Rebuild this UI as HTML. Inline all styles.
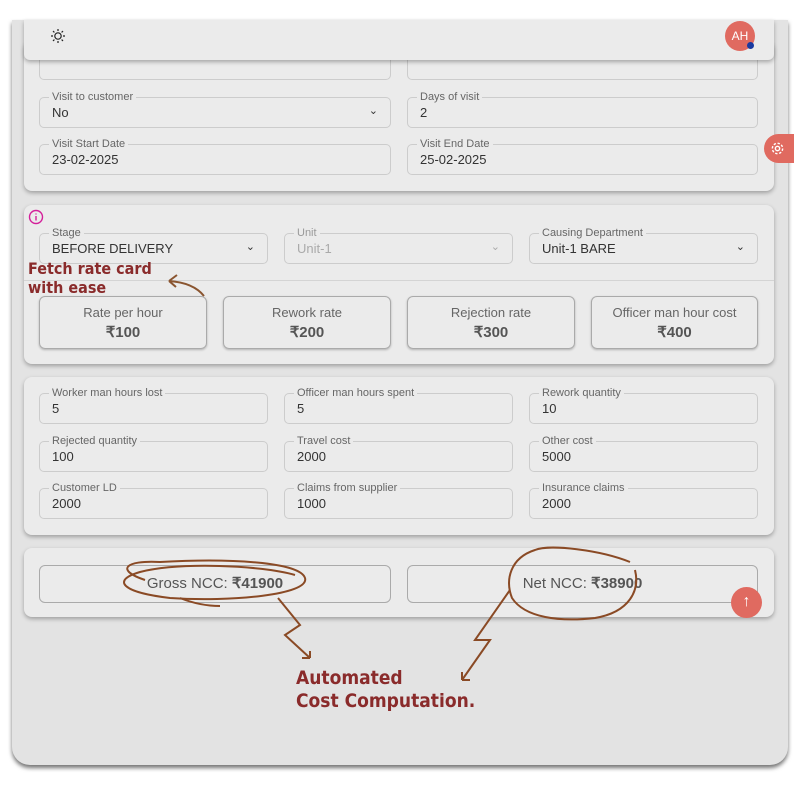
<!DOCTYPE html>
<html><head><meta charset="utf-8"><style>
*{box-sizing:border-box;margin:0;padding:0}
body{width:800px;height:800px;background:#fff;font-family:"Liberation Sans",sans-serif;position:relative;overflow:hidden;color:#333}
.frame{position:absolute;left:12px;top:20px;width:776px;height:745px;background:#e3e3e3;border-radius:0 0 18px 18px;box-shadow:0 3px 4px rgba(0,0,0,.55)}
.a{position:absolute}
.card{position:absolute;left:24px;width:750px;background:#ebebeb;border-radius:8px;box-shadow:0 2px 4px rgba(0,0,0,.3)}
.f{position:absolute;height:31px;border:1px solid #ccc;border-radius:5px}
.f .l{position:absolute;left:9px;top:-7px;font-size:11px;color:#666;background:#ebebeb;padding:0 3px;line-height:12px}
.f .v{position:absolute;left:12px;top:7px;font-size:13px;color:#333}
.f .c{position:absolute;right:12px;top:6px;font-size:11px;color:#333}
.r{position:absolute;top:296px;height:53px;border:1px solid #aaa;border-radius:6px;text-align:center;box-shadow:0 1px 2px rgba(0,0,0,.25)}
.r .t{font-size:13px;color:#666;margin-top:8px}
.r .n{font-size:15px;font-weight:bold;color:#555;margin-top:3px}
.ann{position:absolute;color:#8a2b2b;font-weight:bold;font-family:"DejaVu Sans Condensed","DejaVu Sans",sans-serif}
</style></head><body>
<div class="frame"></div>
<div class="card" style="top:20px;height:40px;border-radius:0 0 6px 6px;z-index:3">
<svg class="a" style="left:26px;top:8px" width="16" height="16" viewBox="0 0 16 16" fill="none" stroke="#222" stroke-width="1.2"><circle cx="8" cy="8" r="3.2"/><path d="M8 1v2M8 13v2M1 8h2M13 8h2M3 3l1.4 1.4M11.6 11.6L13 13M3 13l1.4-1.4M11.6 4.4L13 3"/></svg>
<div class="a" style="left:701px;top:1px;width:30px;height:30px;border-radius:50%;background:#e06a60;color:#fff;font-size:12px;text-align:center;line-height:30px">AH</div>
<div class="a" style="left:723px;top:22px;width:7px;height:7px;border-radius:50%;background:#1a3aa0"></div>
</div>
<div class="card" style="top:40px;height:151px"></div>
<div class="f" style="left:39px;top:50px;width:352px;height:30px"></div>
<div class="f" style="left:407px;top:50px;width:351px;height:30px"></div>
<div class="f" style="left:39px;top:97px;width:352px"><span class="l">Visit to customer</span><span class="v">No</span><span class="c">⌄</span></div>
<div class="f" style="left:407px;top:97px;width:351px"><span class="l">Days of visit</span><span class="v">2</span></div>
<div class="f" style="left:39px;top:144px;width:352px"><span class="l">Visit Start Date</span><span class="v">23-02-2025</span></div>
<div class="f" style="left:407px;top:144px;width:351px"><span class="l">Visit End Date</span><span class="v">25-02-2025</span></div>
<div class="a" style="left:764px;top:134px;width:30px;height:29px;border-radius:15px 0 0 15px;background:#e06a60"></div>
<svg class="a" style="left:770px;top:141px" width="15" height="15" viewBox="0 0 16 16" fill="none" stroke="#fff" stroke-width="1.5"><circle cx="8" cy="8" r="2.3"/><circle cx="8" cy="8" r="5.5" stroke-dasharray="2.5 1.8"/></svg>
<div class="card" style="top:205px;height:159px"></div>
<svg class="a" style="left:28px;top:209px" width="16" height="16" viewBox="0 0 16 16" fill="none" stroke="#d4209a" stroke-width="1.4"><circle cx="8" cy="8" r="6.5"/><path d="M8 7v4.5M8 4.5v1"/></svg>
<div class="f" style="left:39px;top:233px;width:229px"><span class="l">Stage</span><span class="v">BEFORE DELIVERY</span><span class="c">⌄</span></div>
<div class="f" style="left:284px;top:233px;width:229px"><span class="l" style="color:#999">Unit</span><span class="v" style="color:#aaa">Unit-1</span><span class="c" style="color:#aaa">⌄</span></div>
<div class="f" style="left:529px;top:233px;width:229px"><span class="l">Causing Department</span><span class="v">Unit-1 BARE</span><span class="c">⌄</span></div>
<div class="a" style="left:24px;top:280px;width:750px;height:1px;background:#d4d4d4"></div>
<div class="r" style="left:39px;width:168px"><div class="t">Rate per hour</div><div class="n">₹100</div></div>
<div class="r" style="left:223px;width:168px"><div class="t">Rework rate</div><div class="n">₹200</div></div>
<div class="r" style="left:407px;width:168px"><div class="t">Rejection rate</div><div class="n">₹300</div></div>
<div class="r" style="left:591px;width:167px"><div class="t">Officer man hour cost</div><div class="n">₹400</div></div>
<div class="ann" style="left:28px;top:259px;font-size:16px;line-height:19px">Fetch rate card<br>with ease</div>
<svg class="a" style="left:160px;top:270px" width="50" height="30" fill="none" stroke="#8a5530" stroke-width="2"><path d="M44 26C36 16 24 12 9 11M9 11l8-6M9 11l7 6"/></svg>
<div class="card" style="top:377px;height:158px"></div>
<div class="f" style="left:39px;top:393px;width:229px"><span class="l">Worker man hours lost</span><span class="v">5</span></div>
<div class="f" style="left:284px;top:393px;width:229px"><span class="l">Officer man hours spent</span><span class="v">5</span></div>
<div class="f" style="left:529px;top:393px;width:229px"><span class="l">Rework quantity</span><span class="v">10</span></div>
<div class="f" style="left:39px;top:441px;width:229px"><span class="l">Rejected quantity</span><span class="v">100</span></div>
<div class="f" style="left:284px;top:441px;width:229px"><span class="l">Travel cost</span><span class="v">2000</span></div>
<div class="f" style="left:529px;top:441px;width:229px"><span class="l">Other cost</span><span class="v">5000</span></div>
<div class="f" style="left:39px;top:488px;width:229px"><span class="l">Customer LD</span><span class="v">2000</span></div>
<div class="f" style="left:284px;top:488px;width:229px"><span class="l">Claims from supplier</span><span class="v">1000</span></div>
<div class="f" style="left:529px;top:488px;width:229px"><span class="l">Insurance claims</span><span class="v">2000</span></div>
<div class="card" style="top:548px;height:69px"></div>
<div class="a" style="left:39px;top:565px;width:352px;height:38px;border:1px solid #aaa;border-radius:6px;text-align:center;line-height:36px;font-size:15px;color:#555">Gross NCC: <b>₹41900</b></div>
<div class="a" style="left:407px;top:565px;width:351px;height:38px;border:1px solid #aaa;border-radius:6px;text-align:center;line-height:36px;font-size:15px;color:#555">Net NCC: <b>₹38900</b></div>
<div class="a" style="left:731px;top:587px;width:31px;height:31px;border-radius:50%;background:#e06a60;color:#fff;text-align:center;line-height:30px;font-size:16px">↑</div>
<svg class="a" style="left:0;top:540px" width="800" height="150" fill="none" stroke="#8a4a25" stroke-width="2">
<path d="M145 40C115 30 125 20 160 22C230 18 300 22 305 38C310 55 230 62 170 58C120 52 112 40 140 32C180 22 260 25 295 35"/>
<path d="M180 58C190 62 205 66 220 66"/>
<path d="M278 58L300 85L285 95L310 118M310 118l-8 0M310 118l0-7"/>
<path d="M420 22C390 10 340 4 325 10C300 18 295 40 302 58C315 78 350 82 385 78C420 72 430 50 425 30" transform="translate(210,0)"/>
<path d="M510 50L475 100L490 100L462 140M462 140l8 0M462 140l0-8"/>
</svg>
<div class="ann" style="left:296px;top:667px;font-size:19px;line-height:23px">Automated<br>Cost Computation.</div>
</body></html>
